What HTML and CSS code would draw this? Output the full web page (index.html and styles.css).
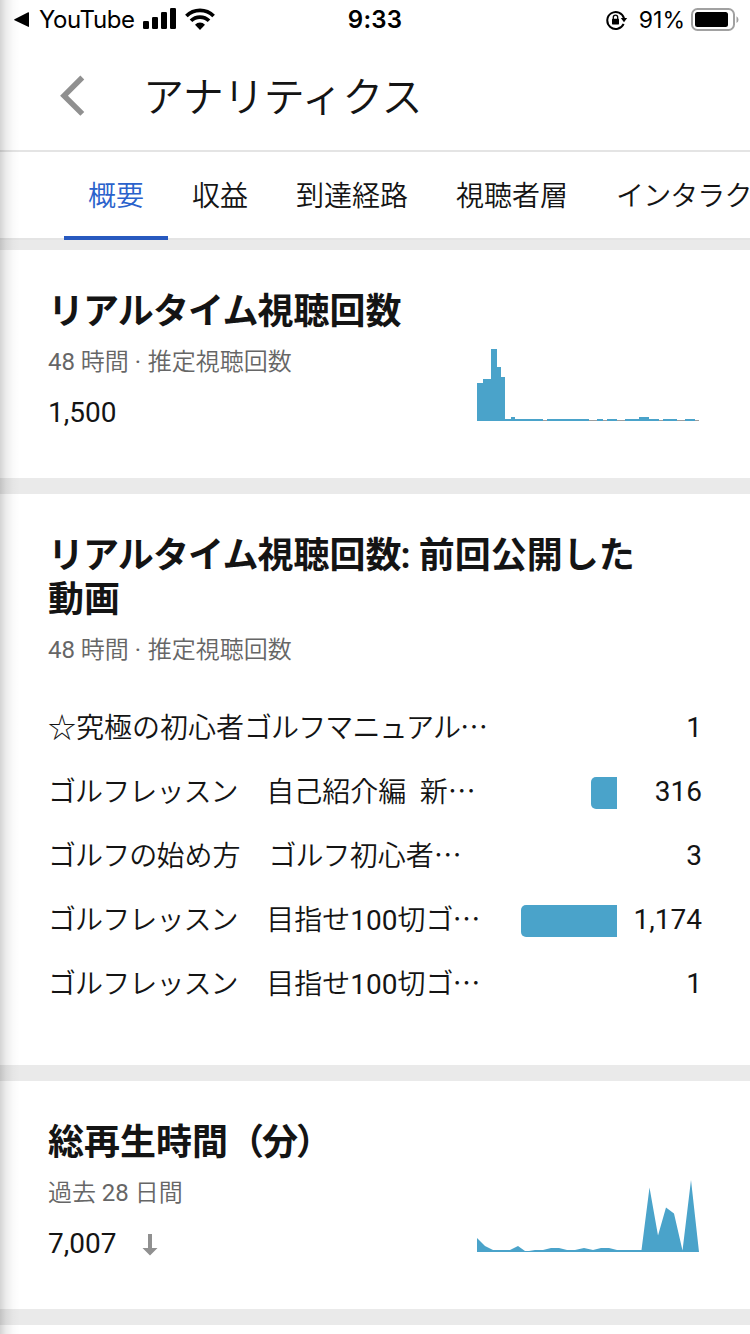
FILE: index.html
```html
<!DOCTYPE html>
<html lang="ja">
<head>
<meta charset="utf-8">
<title>アナリティクス</title>
<link rel="stylesheet" href="styles.css">
</head>
<body>
<div class="screen">
  <div class="status">
    <div class="status-left">
      <svg class="back-app" width="16" height="16" viewBox="0 0 16 16"><path d="M.5 7.2 14.2.3q.8-.3.8.6v13.4q0 .9-.8.5L.5 8.2q-.7-.5 0-1z"/></svg>
      <span class="app-name">YouTube</span>
      <svg class="signal" width="34" height="22" viewBox="0 0 34 22"><rect x="0" y="13" width="6" height="8" rx="1.3"/><rect x="9" y="9" width="6" height="12" rx="1.3"/><rect x="18" y="4" width="6" height="17" rx="1.3"/><rect x="27" y="0" width="6" height="21" rx="1.3"/></svg>
      <svg class="wifi" width="30" height="22" viewBox="0 0 30 22"><g fill="none" stroke="#000" stroke-width="3.7"><path d="M1.4 8A19.2 19.2 0 0 1 28.6 8"/><path d="M6 12.8a12.7 12.7 0 0 1 18 0"/></g><path d="M10 16.7a7 7 0 0 1 10 0L15 22z"/></svg>
    </div>
    <div class="clock">9:33</div>
    <div class="status-right">
      <svg width="22" height="20" viewBox="0 0 22 20"><path d="M17.6 13.8A8.5 8.5 0 1 1 18 8.3" fill="none" stroke="#000" stroke-width="2"/><path d="M14.8 8h6.4L18 12.3z"/><rect x="6" y="8.8" width="7" height="5.6" rx=".6"/><path d="M7.3 9V7.3a2.2 2.2 0 0 1 4.4 0V9" fill="none" stroke="#000" stroke-width="1.3"/></svg>
      <span class="percent">91%</span>
      <svg class="battery" width="48" height="24" viewBox="0 0 48 24"><rect x="1" y="1" width="42" height="21" rx="5.5" fill="none" stroke="#a1a1a1" stroke-width="2"/><rect x="4" y="4" width="33" height="15" rx="2.5"/><path d="M45.5 8.3q2 1.2 2 3.4t-2 3.4z" fill="#a1a1a1"/></svg>
    </div>
  </div>
  <header class="header">
    <svg width="26" height="42" viewBox="0 0 26 42"><path d="M22.3 2.5 4 20.7l18.3 18.2" fill="none" stroke="#909090" stroke-width="5.5"/></svg>
    <h1 class="title">アナリティクス</h1>
  </header>
  <nav class="tabs">
    <div class="tab active">概要</div>
    <div class="tab">収益</div>
    <div class="tab">到達経路</div>
    <div class="tab">視聴者層</div>
    <div class="tab kana">インタラクション</div>
  </nav>

  <section class="card summary first">
    <div>
      <h2 class="heading"><span class="tight">リアルタイム</span>視聴回数</h2>
      <p class="sub"><span class="latin">48</span> 時間 <span class="latin dot">·</span> 推定視聴回数</p>
      <p class="number">1,500</p>
    </div>
    <svg class="chart" width="222" height="73" viewBox="0 0 222 73"><path d="M0 71.5h222" stroke="#9e9e9e"/><path fill="#4aa3ca" d="M0 72V34h6v-4h8V0h6v18h4v10h4v42h6v-2h4v2h28v2zM70 70h42v2H70zM120 70h6v2h-6zM130 70h10v2h-10zM148 70h14v-2h10v2h10v2h-34zM186 70h14v2h-14zM208 70h10v2h-10z"/></svg>
  </section>

  <section class="card videos">
    <h2 class="heading"><span class="tight">リアルタイム</span>視聴回<span class="colon">数:</span> 前回公開した<br>動画</h2>
    <p class="sub"><span class="latin">48</span> 時間 <span class="latin dot">·</span> 推定視聴回数</p>
    <div class="rows">
      <div class="row"><span class="name">☆究極の初心者<span class="kana">ゴルフマニュアル</span>⋯</span><span class="value">1</span></div>
      <div class="row"><span class="name"><span class="kana">ゴルフレッスン</span><span class="gap">　</span>自己紹介編&nbsp; 新⋯</span><i class="bar" style="width:26px"></i><span class="value">316</span></div>
      <div class="row"><span class="name"><span class="kana">ゴルフの</span>始め方　<span class="kana">ゴルフ</span>初心者⋯</span><span class="value">3</span></div>
      <div class="row"><span class="name"><span class="kana">ゴルフレッスン</span><span class="gap">　</span>目指せ<span class="latin">100</span>切<span class="kana">ゴ</span>⋯</span><i class="bar" style="width:96px"></i><span class="value">1,174</span></div>
      <div class="row"><span class="name"><span class="kana">ゴルフレッスン</span><span class="gap">　</span>目指せ<span class="latin">100</span>切<span class="kana">ゴ</span>⋯</span><span class="value">1</span></div>
    </div>
  </section>

  <section class="card summary">
    <div>
      <h2 class="heading">総再生時間<span class="paren">（分）</span></h2>
      <p class="sub">過去 <span class="latin">28</span> 日間</p>
      <p class="number">7,007<svg class="down" width="16" height="22" viewBox="0 0 16 22"><path d="M6 0h4v14h5.5L8 21.5.5 14H6z" fill="#909090"/></svg></p>
    </div>
    <svg class="chart" width="222" height="73" viewBox="0 0 222 73"><path fill="#4aa3ca" d="M0 72V58l8 8 8 4h17l8-4 7 5h4l6-1h8l8-2h8l8 2h8l9-2 9 2 8-2h8l8 2h24.5l8-62.5 8.5 48 8-28 8 6 8.5 37L214 0l8 72z"/></svg>
  </section>
  <section class="card next"></section>
  <div class="edge"></div>
</div>
</body>
</html>
```
FILE: styles.css
```css
* { box-sizing: border-box; }
body { margin: 0; background: #fff; }
h1, h2, p { margin: 0; font-weight: 350; }
svg { display: block; flex: none; }

.screen {
  position: relative;
  width: 750px;
  height: 1334px;
  overflow: hidden;
  display: flex;
  flex-direction: column;
  background: #eaeaea;
  color: #141414;
  font-family: Roboto, "Noto Sans CJK JP", sans-serif;
  font-weight: 400;
}

.status {
  flex: none;
  height: 40px;
  display: grid;
  grid-template-columns: 1fr auto 1fr;
  align-items: center;
  padding: 0 11px 0 14px;
  background: #fff;
  color: #000;
  font-family: Inter, sans-serif;
  font-size: 24px;
  line-height: 40px;
}
.status-left, .status-right { display: flex; align-items: center; }
.status-right { justify-content: flex-end; }
.app-name { margin-left: 9px; letter-spacing: -0.4px; }
.signal { margin: -2px 8px 0 8px; }
.wifi { margin-top: -2px; }
.battery { margin-top: -1px; }
.clock { margin-left: -3px; font-weight: 600; letter-spacing: 0.2px; }
.percent { margin: 0 6px 0 11px; font-size: 23px; }

.header {
  flex: none;
  height: 112px;
  display: flex;
  align-items: center;
  padding: 2px 0 0 60px;
  background: #fff;
  border-bottom: 2px solid #e4e4e4;
}
.title {
  margin: -4px 0 0 57px;
  font-family: "Noto Sans CJK JP", sans-serif;
  font-size: 41px;
  letter-spacing: -0.5px;
  line-height: 60px;
}

.tabs {
  height: 88px;
  flex: none;
  display: flex;
  padding-left: 64px;
  background: #fff;
  border-bottom: 2px solid #e4e4e4;
}
.tab {
  flex: none;
  height: 88px;
  padding: 2px 24px 0;
  font-size: 28px;
  font-weight: 350;
  line-height: 86px;
  white-space: nowrap;
}
.tab.active { color: #2a62cc; border-bottom: 4px solid #2859bf; }

.card { flex: none; margin-bottom: 16px; padding: 40px 48px 0; background: #fff; }
.first { margin-top: 10px; }
.summary { height: 228px; display: flex; justify-content: space-between; }
.videos { height: 571px; }
.next { height: 60px; }

.heading { font-size: 36px; font-weight: 700; line-height: 44px; white-space: nowrap; }
.tight { letter-spacing: -0.9px; }
.colon { letter-spacing: -1px; }
.paren { letter-spacing: -2px; }
.latin { font-weight: 400; }
.dot { margin-right: 1px; }
.sub {
  margin-top: 10px;
  font-size: 24px;
  line-height: 36px;
  color: #666;
}
.number {
  display: flex;
  align-items: center;
  margin-top: 15px;
  font-size: 28px;
  font-weight: 400;
  line-height: 36px;
}
.down { margin: 2px 0 0 26px; }
.chart { margin: 59px 3px 0 0; }

.rows { margin-top: 29px; }
.row {
  height: 64px;
  display: flex;
  align-items: center;
  font-size: 28px;
  line-height: 60px;
}
.name { flex: 1; margin-top: -1px; font-weight: 350; white-space: nowrap; }
.kana { letter-spacing: -0.9px; }
.gap { letter-spacing: 0.5px; }
.bar { height: 32px; border-radius: 5px 0 0 5px; background: #4aa3ca; }
.value { width: 85px; margin-top: -2px; text-align: right; }

.edge {
  position: absolute;
  inset: 0 auto 0 0;
  width: 20px;
  background: linear-gradient(to right, rgba(0,0,0,.17), rgba(0,0,0,.075) 30%, rgba(0,0,0,.02) 65%, rgba(0,0,0,0));
}
```
